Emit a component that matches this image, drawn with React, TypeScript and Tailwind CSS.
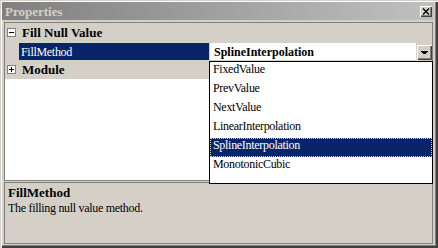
import React from 'react';

const serif = { fontFamily: '"Liberation Serif", "Times New Roman", serif' };

const ExpandBox: React.FC<{ open: boolean }> = ({ open }) => (
  <div className="relative w-[9px] h-[9px] border border-[#808080] bg-white">
    <div className="absolute left-[1px] top-[3px] w-[5px] h-[1px] bg-black" />
    {!open && <div className="absolute left-[3px] top-[1px] w-[1px] h-[5px] bg-black" />}
  </div>
);

const options = ['FixedValue', 'PrevValue', 'NextValue', 'LinearInterpolation', 'SplineInterpolation', 'MonotonicCubic'];

export default function App() {
  const selected = 'SplineInterpolation';

  return (
    <div
      className="relative w-[438px] h-[248px] bg-[#d4d0c8] flex flex-col pt-[2px] pl-[2px] pr-[4px] pb-[4px] shadow-[inset_1px_1px_0_#d4d0c8,inset_2px_2px_0_#ffffff,inset_-1px_-1px_0_#404040,inset_-2px_-2px_0_#404040,inset_-3px_-3px_0_#808080]"
      style={serif}
    >
      {/* Title bar */}
      <div className="h-[18px] flex items-center justify-between pl-[3px] pr-[2px] bg-[linear-gradient(to_right,#808080,#c0c0c0)]">
        <span className="text-[13px] font-bold text-[#d4d0c8] leading-none">Properties</span>
        <div className="w-[12px] h-[11px] bg-[#d4d0c8] shadow-[inset_1px_1px_0_#ffffff,inset_-1px_-1px_0_#404040,inset_-2px_-2px_0_#808080] flex items-center justify-center">
          <svg width="8" height="7" viewBox="0 0 8 7">
            <path d="M1 0.5 L7 6.5 M7 0.5 L1 6.5" stroke="#000" strokeWidth="1.3" />
          </svg>
        </div>
      </div>

      {/* Property grid */}
      <div className="mt-[2px] ml-[2px] mr-[1px] h-[159px] border border-[#808080] bg-white flex flex-col">
        <div className="h-[19px] bg-[#d4d0c8] flex items-center">
          <div className="w-[17px] pl-[2px]"><ExpandBox open /></div>
          <span className="text-[13px] font-bold text-black leading-none">Fill Null Value</span>
        </div>
        <div className="h-[18px] flex bg-[#d4d0c8] border-t border-[#d4d0c8]">
          <div className="w-[14px]" />
          <div className="w-[190px] bg-[#0a246a] text-white text-[12px] tracking-[-0.3px] flex items-center pl-[2px]">FillMethod</div>
          <div className="w-[1px]" />
          <div className="flex-1 bg-white flex items-center pl-[4px] text-[12px] font-bold text-black">{selected}</div>
          <div className="w-[16px] h-[16px] self-end bg-[#d4d0c8] shadow-[inset_1px_1px_0_#d4d0c8,inset_2px_2px_0_#ffffff,inset_-1px_-1px_0_#404040,inset_-2px_-2px_0_#808080] flex items-center justify-center">
            <svg width="7" height="5" viewBox="0 0 7 5">
              <path d="M0 1 H7 V2 H6 V3 H5 V4 H2 V3 H1 V2 H0 Z" fill="#000" />
            </svg>
          </div>
        </div>
        <div className="h-[19px] bg-[#d4d0c8] flex items-center">
          <div className="w-[17px] pl-[2px]"><ExpandBox open={false} /></div>
          <span className="text-[13px] font-bold text-black leading-none">Module</span>
        </div>
        <div className="flex-1 bg-white" />
      </div>

      {/* Description */}
      <div className="mt-[1px] ml-[2px] mr-[1px] flex-1 border border-[#808080] bg-[#d4d0c8] pl-[3px] pt-[1px]">
        <div className="text-[13px] font-bold text-black leading-[17px]">FillMethod</div>
        <div className="text-[12px] tracking-[-0.3px] text-black leading-[15px]">The filling null value method.</div>
      </div>

      {/* Dropdown list */}
      <div className="absolute left-[209px] top-[61px] w-[224px] h-[123px] border border-black bg-white">
        {options.map((o) => (
          <div
            key={o}
            className={
              o === selected
                ? 'h-[19px] flex items-center pl-[2px] pb-[5px] text-[12px] tracking-[-0.3px] bg-[#0a246a] text-white border border-dotted border-[#d4d0c8]'
                : 'h-[19px] flex items-center pl-[3px] pb-[5px] text-[12px] tracking-[-0.3px] text-black'
            }
          >
            {o}
          </div>
        ))}
      </div>
    </div>
  );
}
